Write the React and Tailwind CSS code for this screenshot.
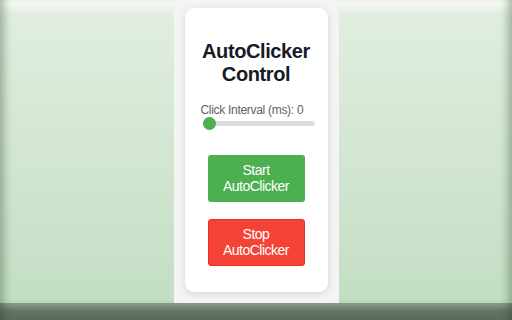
import React, { useState } from 'react';

export default function App() {
  const [interval, setIntervalMs] = useState(0);
  const [running, setRunning] = useState(false);

  return (
    <div className="w-[512px] h-[320px] flex flex-col overflow-hidden font-['Liberation_Sans',Arial,sans-serif]">
      <div className="flex-1 flex justify-center bg-gradient-to-b from-[#e2eee1] to-[#c3dec3] shadow-[inset_10px_0_8px_-6px_rgba(70,100,70,0.45),inset_-10px_0_8px_-6px_rgba(70,100,70,0.45),inset_0_16px_8px_-8px_rgba(255,255,255,0.75)]">
        <div className="w-[165px] bg-[#f4f4f4] px-[11px] pt-[8px] pb-[10px]">
          <div className="bg-white rounded-[9px] shadow-[0_2px_8px_rgba(0,0,0,0.12)] px-4 pt-[32px] pb-[26px] flex flex-col">
            <h1 className="text-center text-[20px] leading-[23px] font-bold tracking-[-0.4px] text-[#161b26]">
              AutoClicker
              <br />
              Control
            </h1>
            <label className="mt-[17px] text-[12px] leading-[14px] tracking-[-0.3px] text-[#5a616b]">
              Click Interval (ms): {interval}
            </label>
            <input
              type="range"
              min="0"
              max="1000"
              value={interval}
              onChange={(e) => setIntervalMs(Number(e.target.value))}
              className="ml-[2px] mt-[4px] w-[112px] h-[5px] appearance-none rounded-full bg-[#dddddd] outline-none [&::-webkit-slider-thumb]:appearance-none [&::-webkit-slider-thumb]:w-[13px] [&::-webkit-slider-thumb]:h-[13px] [&::-webkit-slider-thumb]:rounded-full [&::-webkit-slider-thumb]:bg-[#4caf50] [&::-webkit-slider-thumb]:cursor-pointer"
            />
            <button
              onClick={() => setRunning(true)}
              className="mt-[29px] mx-auto w-[97px] h-[47px] rounded-[3px] bg-[#4caf50] text-white text-[14px] leading-[15.5px] tracking-[-0.5px] flex items-center justify-center text-center"
            >
              Start
              <br />
              AutoClicker
            </button>
            <button
              onClick={() => setRunning(false)}
              className="mt-[17px] mx-auto w-[97px] h-[47px] rounded-[3px] bg-[#f44336] border border-[#ee2e20] text-white text-[14px] leading-[15.5px] tracking-[-0.5px] flex items-center justify-center text-center"
            >
              Stop
              <br />
              AutoClicker
            </button>
          </div>
        </div>
      </div>
      <div className="h-[17px] bg-gradient-to-b from-[#8fa08e] via-[#637362] to-[#5f6e5e] shadow-[inset_10px_0_8px_-6px_rgba(40,60,40,0.4),inset_-10px_0_8px_-6px_rgba(40,60,40,0.4)]" />
    </div>
  );
}
